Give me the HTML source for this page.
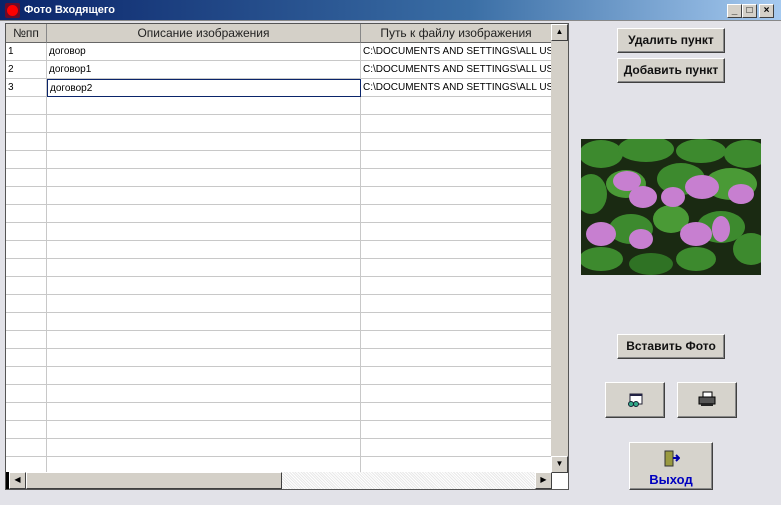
<!DOCTYPE html>
<html><head><meta charset="utf-8"><style>
*{box-sizing:border-box;margin:0;padding:0}
body{width:781px;height:505px;overflow:hidden;background:#e2e2e8;font-family:"Liberation Sans",sans-serif;position:relative}
.tb{position:absolute;left:0;top:0;width:781px;height:21px;background:linear-gradient(90deg,#0a246a,#3a6ea5 60%,#a6caf0);border-bottom:1px solid #888}
.tb .t{position:absolute;left:24px;top:4px;color:#fff;font-weight:bold;font-size:11px}
.tb .ic{position:absolute;left:5px;top:3px;width:15px;height:15px;background:#6b0c2a;border-radius:2px}
.tb .ic::after{content:"";position:absolute;left:2px;top:2px;width:11px;height:11px;border-radius:50%;background:#f00}
.wb{position:absolute;top:4px;width:15px;height:14px;background:#d4d0c8;border:1px solid;border-color:#fff #404040 #404040 #fff;font-size:10px;font-weight:bold;text-align:center;line-height:12px}
.grid{position:absolute;left:5px;top:23px;width:564px;height:467px;background:#fff;border:1px solid #555;overflow:hidden}
.hdr{position:absolute;top:0;height:19px;background:#d4d0c8;border-right:1px solid #888;border-bottom:1px solid #666;font-size:12px;color:#222;text-align:center;line-height:19px}
.row{position:absolute;left:0;width:546px;height:18px;border-bottom:1px solid #c8c8c8;font-size:10px;line-height:17px}
.c{position:absolute;top:0;height:18px;border-right:1px solid #c8c8c8;padding-left:2px;white-space:nowrap;overflow:hidden}
.vs{position:absolute;left:545px;top:0;width:17px;height:449px;background:#d4d0c8}
.sb{position:absolute;background:#d4d0c8;border:1px solid;border-color:#fff #404040 #404040 #fff;font-size:8px;text-align:center;line-height:14px}
.hs{position:absolute;left:0;top:448px;width:546px;height:17px;background:repeating-linear-gradient(45deg,#e8e8e8 0 1px,#fff 1px 2px)}
.btn{position:absolute;background:#d6d3cc;border:1px solid;border-color:#fff #404040 #404040 #fff;box-shadow:inset -1px -1px #888;font-size:12px;font-weight:bold;color:#111;text-align:center}
</style></head><body>
<div class="tb"><div class="ic"></div><div class="t">Фото Входящего</div>
<div class="wb" style="left:727px">_</div><div class="wb" style="left:742px">□</div><div class="wb" style="left:759px">×</div></div>
<div class="grid">
<div class="hdr" style="left:0;width:41px">№пп</div>
<div class="hdr" style="left:41px;width:314px">Описание изображения</div>
<div class="hdr" style="left:355px;width:191px">Путь к файлу изображения</div>
<div class="row" style="top:19px"><div class="c" style="left:0;width:41px">1</div><div class="c" style="left:41px;width:314px">договор</div><div class="c" style="left:355px;width:191px">C:\DOCUMENTS AND SETTINGS\ALL US</div></div>
<div class="row" style="top:37px"><div class="c" style="left:0;width:41px">2</div><div class="c" style="left:41px;width:314px">договор1</div><div class="c" style="left:355px;width:191px">C:\DOCUMENTS AND SETTINGS\ALL US</div></div>
<div class="row" style="top:55px"><div class="c" style="left:0;width:41px">3</div><div class="c" style="left:41px;width:314px;border:1px solid #0a246a">договор2</div><div class="c" style="left:355px;width:191px">C:\DOCUMENTS AND SETTINGS\ALL US</div></div>
<div id="rows"></div>
<div class="vs"><div class="sb" style="left:0;top:0;width:17px;height:17px">▲</div><div class="sb" style="left:0;top:432px;width:17px;height:17px">▼</div></div>
<div class="hs"><div style="position:absolute;left:0;top:0;width:3px;height:17px;background:#000"></div><div class="sb" style="left:3px;top:0;width:17px;height:17px">◀</div><div class="sb" style="left:20px;top:0;width:256px;height:17px"></div><div class="sb" style="left:529px;top:0;width:17px;height:17px">▶</div></div>
</div>
<script>
var h='';for(var y=73;y<448;y+=18){h+='<div class="row" style="top:'+y+'px"><div class="c" style="left:0;width:41px"></div><div class="c" style="left:41px;width:314px"></div></div>';}
document.getElementById('rows').innerHTML=h;
</script>
<svg style="position:absolute;left:581px;top:139px" width="180" height="136" viewBox="0 0 180 136">
<rect width="180" height="136" fill="#1a2a12"/>
<g fill="#3d8a2e">
<ellipse cx="20" cy="15" rx="22" ry="14"/><ellipse cx="65" cy="10" rx="28" ry="13"/><ellipse cx="120" cy="12" rx="25" ry="12"/><ellipse cx="165" cy="15" rx="22" ry="14"/>
<ellipse cx="10" cy="55" rx="16" ry="20"/><ellipse cx="45" cy="45" rx="20" ry="14" fill="#4a9a36"/><ellipse cx="100" cy="40" rx="24" ry="16"/><ellipse cx="150" cy="45" rx="26" ry="16" fill="#4a9a36"/>
<ellipse cx="50" cy="90" rx="22" ry="15"/><ellipse cx="90" cy="80" rx="18" ry="14" fill="#4a9a36"/><ellipse cx="140" cy="88" rx="24" ry="16"/><ellipse cx="170" cy="110" rx="18" ry="16"/>
<ellipse cx="20" cy="120" rx="22" ry="12"/><ellipse cx="70" cy="125" rx="22" ry="11" fill="#2f7224"/><ellipse cx="115" cy="120" rx="20" ry="12"/>
</g>
<g fill="#c77fd0">
<ellipse cx="46" cy="42" rx="14" ry="10"/><ellipse cx="62" cy="58" rx="14" ry="11"/><ellipse cx="92" cy="58" rx="12" ry="10"/><ellipse cx="121" cy="48" rx="17" ry="12"/><ellipse cx="160" cy="55" rx="13" ry="10"/>
<ellipse cx="20" cy="95" rx="15" ry="12"/><ellipse cx="60" cy="100" rx="12" ry="10"/><ellipse cx="115" cy="95" rx="16" ry="12"/><ellipse cx="140" cy="90" rx="9" ry="13"/>
</g>
</svg>
<div class="btn" style="left:617px;top:28px;width:108px;height:25px;line-height:23px">Удалить пункт</div>
<div class="btn" style="left:617px;top:58px;width:108px;height:25px;line-height:23px">Добавить пункт</div>
<div class="btn" style="left:617px;top:334px;width:108px;height:25px;line-height:23px">Вставить Фото</div>
<div class="btn" style="left:605px;top:382px;width:60px;height:36px"><svg width="16" height="14" style="margin-top:10px" viewBox="0 0 16 14"><rect x="3" y="1" width="12" height="10" fill="#fff" stroke="#223"/><rect x="3" y="1" width="12" height="2" fill="#224"/><circle cx="4" cy="11" r="2.5" fill="#3a8" stroke="#123"/><circle cx="9" cy="11" r="2.5" fill="#3a8" stroke="#123"/></svg></div>
<div class="btn" style="left:677px;top:382px;width:60px;height:36px"><svg width="18" height="16" style="margin-top:8px" viewBox="0 0 18 16"><rect x="5" y="1" width="9" height="6" fill="#fff" stroke="#000"/><rect x="1" y="6" width="16" height="7" fill="#555" stroke="#000"/><rect x="3" y="12" width="12" height="3" fill="#222"/></svg></div>
<div class="btn" style="left:629px;top:442px;width:84px;height:48px"><svg width="18" height="18" style="margin-top:7px" viewBox="0 0 18 18"><rect x="3" y="1" width="8" height="15" fill="#9a9a40" stroke="#333"/><path d="M11 8h6M14 5l3 3-3 3" stroke="#00a" stroke-width="2" fill="none"/></svg><div style="color:#0000c0;font-size:13px;margin-top:1px">Выход</div></div>
</body></html>
